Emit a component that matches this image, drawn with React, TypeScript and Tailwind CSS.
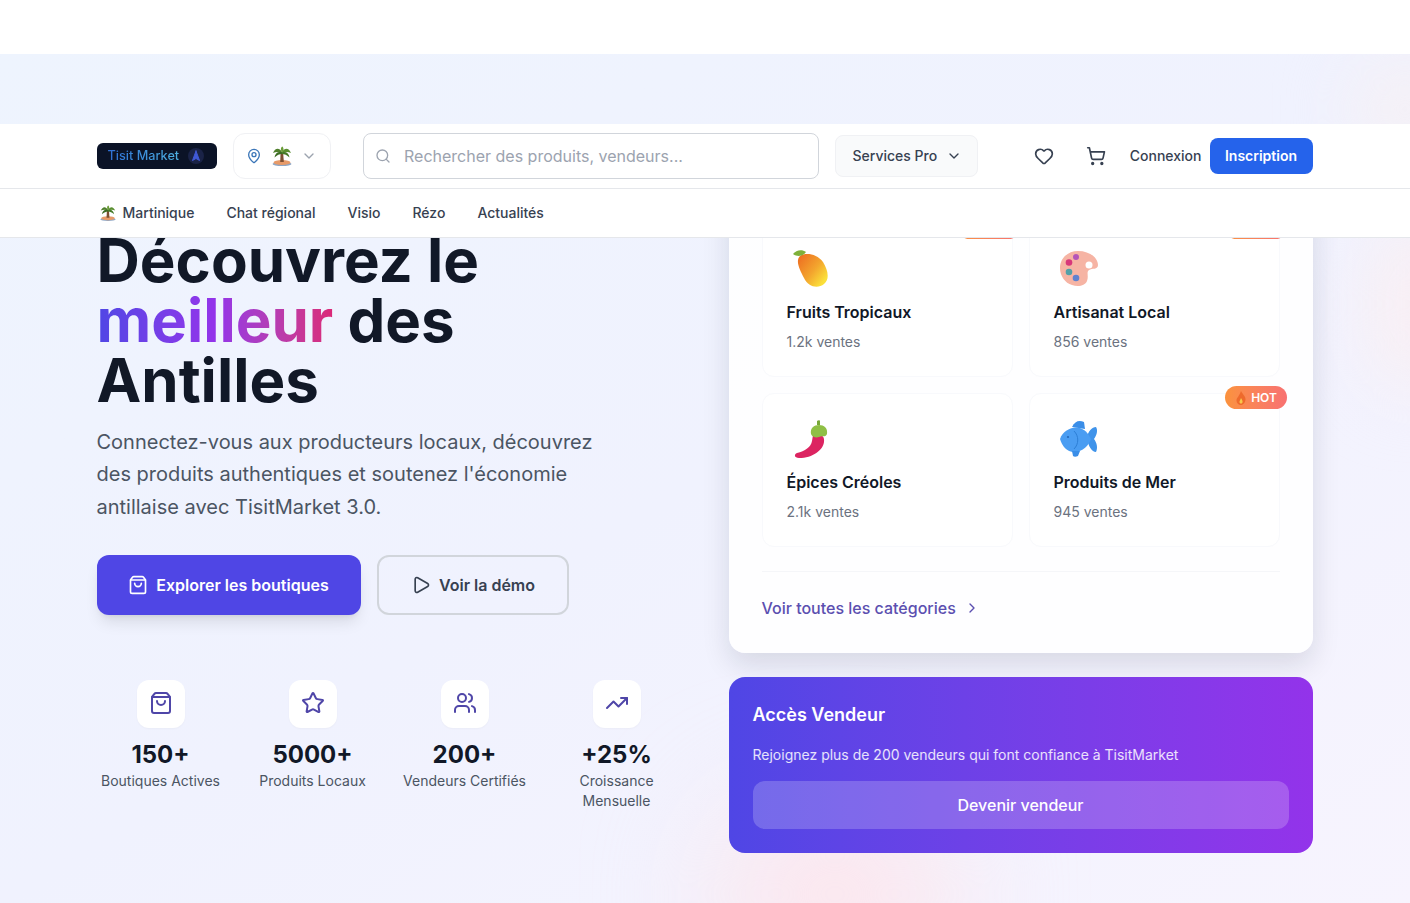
import { ChevronDown, ChevronRight, Heart, MapPin, Navigation2, Play, Search, ShoppingBag, ShoppingCart, Star, TrendingUp, Users } from "lucide-react";
import type { ReactNode } from "react";

function Palm({ className }: { className?: string }) {
    return (
        <svg viewBox="0 0 20 20" className={className}>
            <ellipse cx="10" cy="18" rx="9.500" ry="2" fill="#8fa6c4" />
            <ellipse cx="10" cy="16.500" rx="8.500" ry="2.500" fill="#e79a68" />
            <path d="M8.600 7 L11.200 7 L11.800 16 L8.200 16 Z" fill="#7d4f32" />
            <path d="M10 6 C7 1 3 2 1 7 C4 5.500 7.500 5.500 10 7.500 Z" fill="#4f7f2c" />
            <path d="M10 6 C13 1 17 2 19 7 C16 5.500 12.500 5.500 10 7.500 Z" fill="#5a8f30" />
            <path d="M10 6.500 C6.500 5 3 7 2.500 11.500 C5 9 7.500 8 10 8 Z" fill="#3c6c24" />
            <path d="M10 6.500 C13.500 5 17 7 17.500 11.500 C15 9 12.500 8 10 8 Z" fill="#467a28" />
            <path d="M10 6.500 C8 3.500 9 1 10.500 0.500 C12 2.500 12 5 10 6.500 Z" fill="#6a9c38" />
        </svg>
    );
}

function Mango() {
    return (
        <svg viewBox="0 0 38 38" className="h-[38px] w-[38px]">
            <defs>
                <linearGradient id="mango" x1="0.1" y1="0.1" x2="0.9" y2="0.8">
                    <stop offset="0" stopColor="#ee7423" />
                    <stop offset="0.55" stopColor="#f3a52e" />
                    <stop offset="1" stopColor="#fbe03a" />
                </linearGradient>
            </defs>
            <path d="M7 6 C13 2 24 4 30 12 C35 20 37 29 31 34 C25 39 15 37 11 28 C7 20 2 11 7 6 Z" fill="url(#mango)" />
            <path d="M0 4 C3 0 9 -1 13 2 C10 6 5 7.500 0 4 Z" fill="#7fb03a" />
        </svg>
    );
}

function Palette() {
    return (
        <svg viewBox="0 0 38 38" className="h-[38px] w-[38px]">
            <path d="M18 1 C30 1 38 8 38 15 C38 20 32 18 29 20 C26 22 29 26 27 31 C25 36 18 37 12 35 C5 33 0 26 0 18 C0 8 8 1 18 1 Z" fill="#f6b4a4" />
            <circle cx="16" cy="7" r="3" fill="#b455b8" />
            <circle cx="9" cy="12.500" r="3.300" fill="#d8377a" />
            <circle cx="9" cy="22" r="3.300" fill="#53a0a8" />
            <circle cx="16" cy="28" r="3.300" fill="#5f82cf" />
            <circle cx="29" cy="15" r="3.500" fill="#ffffff" />
        </svg>
    );
}

function Chili() {
    return (
        <svg viewBox="0 0 38 38" className="h-[38px] w-[38px]">
            <path d="M20 15 C28 13 32 16 31 22 C30 30 20 38 6 38 C1 38 1 34 4 33 C12 31 18 27 19 21 Z" fill="#dc2461" />
            <path d="M18 14 C17 8 21 5 26 5 C31 5 35 8 34 14 C32 18 29 15 26 17 C23 18 19 17 18 14 Z" fill="#8fbf45" />
            <path d="M24 5 L24 1 C25 0 27 0 27 1 L27 5 Z" fill="#79a838" />
        </svg>
    );
}

function Fish() {
    return (
        <svg viewBox="0 0 38 36" className="h-[38px] w-[38px]">
            <path d="M12 6 C15 0 19 -1 24 1 L25 8 Z" fill="#3a8ee8" />
            <path d="M27 17 C28 10 32 6 36 6 C38 9 37 14 34 18 C37 22 38 27 36 31 C32 31 28 25 27 17 Z" fill="#3f93ea" />
            <path d="M0 18 C3 9 13 5 20 7 C26 9 29 14 31 18 C29 24 23 31 14 31 C7 31 2 25 0 18 Z" fill="#4a9df2" />
            <path d="M12 30 L20 30 L18 35 C16 36 14 36 13 35 Z" fill="#3a8ee8" />
            <path d="M14 10 C19 15 19 23 14 28" stroke="#2d7fd6" strokeWidth="1" fill="none" />
            <circle cx="8" cy="16" r="1.100" fill="#2468b8" />
        </svg>
    );
}

function Fire() {
    return (
        <svg viewBox="0 0 12 14" className="h-[14px] w-[12px]">
            <path d="M6 0 C7 3 11 5 10.500 9 C10 12.500 7.500 14 6 14 C3.500 14 1.500 12 1.500 9.500 C1.500 7 4 5.500 6 0 Z" fill="#ee6a2c" />
            <path d="M6 7 C7 9 8 10 7.500 11.500 C7 13 5 13 4.500 11.500 C4.200 10 5.500 9 6 7 Z" fill="#f9c84a" />
        </svg>
    );
}

const categories = [
    { name: "Fruits Tropicaux", sales: "1.2k ventes", icon: <Mango />, badge: true },
    { name: "Artisanat Local", sales: "856 ventes", icon: <Palette />, badge: true },
    { name: "Épices Créoles", sales: "2.1k ventes", icon: <Chili />, badge: false },
    { name: "Produits de Mer", sales: "945 ventes", icon: <Fish />, badge: true },
];

const stats: { icon: ReactNode; value: string; label: string }[] = [
    { icon: <ShoppingBag className="h-6 w-6" />, value: "150+", label: "Boutiques Actives" },
    { icon: <Star className="h-6 w-6" />, value: "5000+", label: "Produits Locaux" },
    { icon: <Users className="h-6 w-6" />, value: "200+", label: "Vendeurs Certifiés" },
    { icon: <TrendingUp className="h-6 w-6" />, value: "+25%", label: "Croissance Mensuelle" },
];

export default function App() {
    return (
        <div className="relative h-[903px] overflow-hidden bg-white font-['Inter',sans-serif]">
            <div className="h-[54px] bg-white" />

            {/* Hero */}
            <section className="relative h-[849px] overflow-hidden bg-gradient-to-br from-[#eef4fe] via-[#f0f2fe] to-[#f7f4fe]">
                <div className="absolute left-[720px] top-[760px] h-[160px] w-[230px] rounded-full bg-[#fde4ea] blur-3xl" />
                <div className="absolute left-[1360px] top-[10px] h-[90px] w-[90px] rounded-full bg-[#f8f0f2] blur-2xl" />
                <div className="absolute left-[1380px] top-[170px] h-[160px] w-[80px] rounded-full bg-[#fbeef0] blur-2xl" />

                <div className="relative ml-[96.5px] grid w-[1216px] grid-cols-2 gap-12 pt-[136px]">
                    <div className="pt-[40px]">
                        <h1 className="text-6xl leading-none font-bold text-[#111827]">
                            Découvrez le
                            <br />
                            <span className="bg-gradient-to-r from-[#4f46e5] via-[#9333ea] to-[#db2777] bg-clip-text text-transparent">meilleur</span> des
                            <br />
                            Antilles
                        </h1>
                        <p className="mt-[15.75px] max-w-lg text-xl leading-[32.5px] text-[#4b5563]">
                            Connectez-vous aux producteurs locaux, découvrez des produits authentiques et soutenez l'économie antillaise avec TisitMarket 3.0.
                        </p>
                        <div className="mt-[31.25px] flex gap-4">
                            <button className="flex h-[60px] w-[264px] items-center justify-center gap-2 rounded-xl bg-[#4f46e5] font-semibold text-white shadow-lg">
                                <ShoppingBag className="h-5 w-5" />
                                Explorer les boutiques
                            </button>
                            <button className="flex h-[60px] w-[192px] items-center justify-center gap-2 rounded-xl border-2 border-[#d1d5db] pl-px font-semibold text-[#374151]">
                                <Play className="h-5 w-5" />
                                Voir la démo
                            </button>
                        </div>
                        <div className="mt-[65px] grid grid-cols-4 gap-6">
                            {stats.map((s) => (
                                <div key={s.label} className="flex flex-col items-center text-center">
                                    <div className="flex h-12 w-12 items-center justify-center rounded-xl bg-white pb-px text-[#4f46a8] shadow-[0_1px_2px_rgba(0,0,0,0.03)]">{s.icon}</div>
                                    <div className="mt-[11px] text-2xl leading-8 font-bold text-[#111827]">{s.value}</div>
                                    <div className="text-sm leading-5 text-[#4b5563]">{s.label}</div>
                                </div>
                            ))}
                        </div>
                    </div>

                    <div className="flex flex-col gap-6">
                        <div className="rounded-2xl bg-white/90 px-[33px] pt-[33px] shadow-[0_12px_28px_rgba(15,23,42,0.12)]">
                            <div className="grid grid-cols-2 gap-4">
                                {categories.map((c) => (
                                    <div key={c.name} className="relative h-[154px] rounded-xl border border-[#f8f9fc] bg-white pt-[26px] pl-6">
                                        {c.badge && (
                                            <span className="absolute -top-[8px] -right-[8px] flex h-[23px] w-[62px] items-center justify-center gap-1 rounded-full bg-gradient-to-r from-[#fb923c] to-[#f87171] pl-px text-xs font-semibold text-white">
                                                <Fire />
                                                HOT
                                            </span>
                                        )}
                                        <div className="ml-[6px]">{c.icon}</div>
                                        <div className="mt-[12px] leading-6 font-semibold text-[#111827]">{c.name}</div>
                                        <div className="mt-2 text-sm leading-5 text-[#6b7280]">{c.sales}</div>
                                    </div>
                                ))}
                            </div>
                            <div className="mt-6 flex h-[82px] items-start border-t border-[#f5f6f9] pt-[24px] font-medium text-[#5b4fb0]">
                                <span className="flex items-center gap-2">
                                    Voir toutes les catégories
                                    <ChevronRight className="h-4 w-4" />
                                </span>
                            </div>
                        </div>

                        <div className="rounded-2xl bg-gradient-to-r from-[#4f46e5] to-[#9333ea] p-6 text-white">
                            <div className="text-lg leading-7 font-semibold">Accès Vendeur</div>
                            <p className="mt-4 text-sm leading-5 text-white/85">Rejoignez plus de 200 vendeurs qui font confiance à TisitMarket</p>
                            <button className="mt-4 h-12 w-full rounded-xl bg-white/20 font-medium">Devenir vendeur</button>
                        </div>
                    </div>
                </div>
            </section>

            <header className="absolute top-[124px] right-0 left-0 bg-white">
                <div className="h-[65px] border-b border-[#e5e7eb]">
                    <div className="ml-[96.5px] flex h-full w-[1216px] items-center pb-px">
                        <div className="flex h-[26px] w-[120px] shrink-0 items-center rounded-md bg-[#0b1327] pl-[11px] text-[12.7px] font-medium">
                            <span className="bg-gradient-to-r from-[#2f6fd6] to-[#4fb0e0] bg-clip-text text-transparent">Tisit Market</span>
                            <span className="ml-[9px] flex h-4 w-4 items-center justify-center rounded-full bg-[#1a2347]">
                                <Navigation2 className="h-3 w-3 fill-[#4059d8] text-[#4059d8]" />
                            </span>
                        </div>
                        <div className="ml-4 flex h-[46px] w-[98px] shrink-0 items-center rounded-xl border border-[#f0f1f4] pl-[12.5px]">
                            <MapPin className="h-4 w-4 text-[#3b76b8]" />
                            <Palm className="ml-[10px] h-5 w-5" />
                            <ChevronDown className="ml-[9px] h-4 w-4 text-[#9ca3af]" />
                        </div>
                        <div className="ml-8 flex h-[46px] w-[456px] shrink-0 items-center rounded-lg border border-[#d1d5db] pl-[11px] text-[#9ca3af]">
                            <Search className="h-4 w-4" />
                            <span className="ml-[13.5px] leading-6">Rechercher des produits, vendeurs...</span>
                        </div>
                        <div className="ml-4 flex h-[42px] w-[143px] shrink-0 items-center rounded-lg border border-[#f0f1f4] bg-[#f9fafb] pl-[17px] text-sm font-medium text-[#374151]">
                            Services Pro
                            <ChevronDown className="ml-[9px] h-4 w-4" />
                        </div>
                        <Heart className="ml-[56px] h-5 w-5 shrink-0 text-[#374151]" />
                        <ShoppingCart className="ml-8 h-5 w-5 shrink-0 text-[#374151]" />
                        <div className="ml-auto flex items-center gap-2">
                            <span className="text-sm font-medium text-[#374151]">Connexion</span>
                            <button className="h-9 w-[103px] rounded-lg bg-[#2563eb] text-sm font-semibold text-white">Inscription</button>
                        </div>
                    </div>
                </div>
                <nav className="h-[49px] border-b border-[#e5e7eb]">
                    <div className="ml-[96.5px] flex h-12 w-[1216px] items-center gap-8 text-sm font-medium text-[#374151]">
                        <span className="flex items-center gap-[7px] pl-[3px]">
                            <Palm className="h-4 w-4" />
                            Martinique
                        </span>
                        <span>Chat régional</span>
                        <span>Visio</span>
                        <span>Rézo</span>
                        <span>Actualités</span>
                    </div>
                </nav>
            </header>
        </div>
    );
}
